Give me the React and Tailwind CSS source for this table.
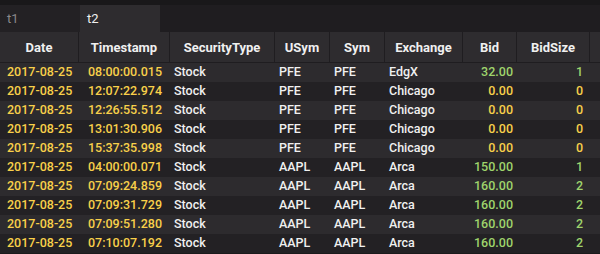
import React from "react";

const cols = [
  { name: "Date", w: "w-[79px]" },
  { name: "Timestamp", w: "w-[91px]" },
  { name: "SecurityType", w: "w-[105px]" },
  { name: "USym", w: "w-[55px]" },
  { name: "Sym", w: "w-[55px]" },
  { name: "Exchange", w: "w-[78px]" },
  { name: "Bid", w: "w-[54px]" },
  { name: "BidSize", w: "w-[73px]" },
];

const rows = [
  ["08:00:00.015", "PFE", "EdgX", "32.00", "1"],
  ["12:07:22.974", "PFE", "Chicago", "0.00", "0"],
  ["12:26:55.512", "PFE", "Chicago", "0.00", "0"],
  ["13:01:30.906", "PFE", "Chicago", "0.00", "0"],
  ["15:37:35.998", "PFE", "Chicago", "0.00", "0"],
  ["04:00:00.071", "AAPL", "Arca", "150.00", "1"],
  ["07:09:24.859", "AAPL", "Arca", "160.00", "2"],
  ["07:09:31.729", "AAPL", "Arca", "160.00", "2"],
  ["07:09:51.280", "AAPL", "Arca", "160.00", "2"],
  ["07:10:07.192", "AAPL", "Arca", "160.00", "2"],
];

const yellow = "text-[#f8d04a]";
const green = "text-[#9fd46c]";
const white = "text-[#f0f0f0]";

export default function App() {
  return (
    <div className="w-[600px] h-[254px] overflow-hidden bg-[#1b1a1c] text-[12.5px] font-medium font-['Roboto',sans-serif] leading-none whitespace-nowrap">
      <div className="h-[5px] bg-[#19181a]" />
      <div className="flex h-[27px] bg-[#1f1d20] text-[13px] font-normal">
        <div className="w-[80px] flex items-center pl-[7px] bg-[#232124] text-[#8a888b]">t1</div>
        <div className="w-[80px] flex items-center pl-[7px] bg-[#2e2c2f] text-[#f0f0f0]">t2</div>
      </div>
      <div className="flex h-[31px] bg-[#2e2c2f] border-b border-[#1f1d20]">
        {cols.map((c) => (
          <div key={c.name} className={`${c.w} shrink-0 flex items-center justify-center font-bold text-[13px] text-[#f0f0f0] border-r border-[#1f1d20]`}>
            {c.name}
          </div>
        ))}
        <div className="flex-1" />
      </div>
      {rows.map((r, i) => {
        const [ts, sym, ex, bid, size] = r;
        const zero = bid === "0.00";
        return (
          <div key={i} className={`flex h-[19px] items-center ${i % 2 === 0 ? "bg-[#2d2b2e]" : "bg-[#232124]"}`}>
            <div className={`w-[79px] shrink-0 pl-[7px] ${yellow}`}>2017-08-25</div>
            <div className={`w-[91px] shrink-0 pl-[9px] ${yellow}`}>{ts}</div>
            <div className={`w-[105px] shrink-0 pl-[4px] ${white}`}>Stock</div>
            <div className={`w-[55px] shrink-0 pl-[4px] ${white}`}>{sym}</div>
            <div className={`w-[55px] shrink-0 pl-[4px] ${white}`}>{sym}</div>
            <div className={`w-[78px] shrink-0 pl-[4px] ${white}`}>{ex}</div>
            <div className={`w-[54px] shrink-0 pr-[4px] text-right ${zero ? yellow : green}`}>{bid}</div>
            <div className={`w-[73px] shrink-0 pr-[7px] text-right ${size === "0" ? yellow : green}`}>{size}</div>
            <div className="flex-1" />
          </div>
        );
      })}
    </div>
  );
}
